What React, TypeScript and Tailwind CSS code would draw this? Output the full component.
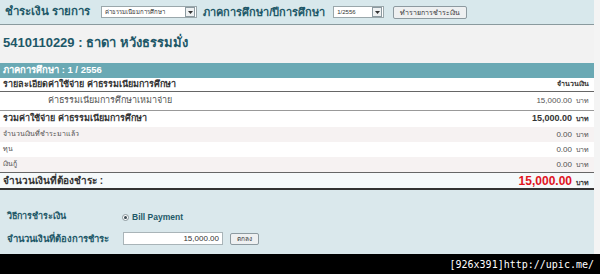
const FONT = "font-['Liberation_Sans','Noto_Sans',sans-serif]";

const rows = [
  { label: "จำนวนเงินที่ชำระมาแล้ว", amount: "0.00", bg: "bg-[#f6f2f2]" },
  { label: "ทุน", amount: "0.00", bg: "bg-white" },
  { label: "เงินกู้", amount: "0.00", bg: "bg-[#f6f2f2]" },
];

function Select({ value, width }: { value: string; width: string }) {
  return (
    <div className={`flex h-[12px] items-center border border-[#9aa7ab] bg-white ${width}`}>
      <span className="flex-1 truncate px-[3px] text-[6px] leading-none text-[#333]">{value}</span>
      <span className="mr-[1px] flex h-[10px] w-[10px] items-center justify-center border border-[#8c9aa0] bg-[#eef1f2]">
        <svg width="5" height="3" viewBox="0 0 5 3">
          <path d="M0 0h5L2.5 3z" fill="#333" />
        </svg>
      </span>
    </div>
  );
}

function Baht({ amount }: { amount: string }) {
  return (
    <span className="flex items-baseline gap-[4px]">
      <span className="text-[8px]">{amount}</span>
      <span className="text-[7px]">บาท</span>
    </span>
  );
}

export default function App() {
  return (
    <div className={`flex h-[274px] w-[600px] flex-col bg-black ${FONT}`}>
      <div className="flex h-[254px] w-[600px]">
        <div className="flex w-[594px] flex-col bg-[#f2f2f2]">
          {/* header */}
          <div className="flex h-[25px] items-center border-b border-[#8a9a9e] bg-[#d8e8ec] pl-[5px]">
            <span className="text-[11.5px] font-bold text-[#1e5868]">ชำระเงิน รายการ</span>
            <div className="ml-[11px]">
              <Select value="ค่าธรรมเนียมการศึกษา" width="w-[96px]" />
            </div>
            <span className="ml-[6px] text-[11px] font-bold text-[#1e5868]">ภาคการศึกษา/ปีการศึกษา</span>
            <div className="ml-[8px]">
              <Select value="1/2556" width="w-[51px]" />
            </div>
            <button className="ml-[9px] h-[13px] w-[74px] rounded-[2px] border border-[#8d9aa0] bg-[#eef0f1] text-[7px] leading-none text-[#333]">
              ทำรายการชำระเงิน
            </button>
          </div>

          {/* student */}
          <div className="flex h-[38px] items-center pl-[3px] pb-[3px]">
            <span className="text-[13px] font-bold text-[#1e5868]">5410110229 : ธาดา หวังธรรมมั่ง</span>
          </div>

          {/* term bar */}
          <div className="flex h-[15px] items-center bg-[#6aa9b4] pl-[3px]">
            <span className="text-[9.5px] font-bold text-white">ภาคการศึกษา : 1 / 2556</span>
          </div>

          {/* table */}
          <div className="flex flex-col bg-white text-[#444]">
            <div className="flex h-[14px] items-center justify-between border-b border-[#666] px-[3px] font-bold text-[#333]">
              <span className="text-[9px]">รายละเอียดค่าใช้จ่าย ค่าธรรมเนียมการศึกษา</span>
              <span className="pr-[2px] text-[7px]">จำนวนเงิน</span>
            </div>
            <div className="flex h-[19px] items-center justify-between border-b border-[#999] pl-[48px] pr-[5px] text-[#555]">
              <span className="text-[9px]">ค่าธรรมเนียมการศึกษาเหมาจ่าย</span>
              <Baht amount="15,000.00" />
            </div>
            <div className="flex h-[16px] items-center justify-between px-[3px] pr-[5px] font-bold text-[#333]">
              <span className="text-[9px]">รวมค่าใช้จ่าย ค่าธรรมเนียมการศึกษา</span>
              <span className="flex items-baseline gap-[4px]">
                <span className="text-[9px]">15,000.00</span>
                <span className="text-[7px]">บาท</span>
              </span>
            </div>
            {rows.map((r) => (
              <div
                key={r.label}
                className={`flex h-[15px] items-center justify-between px-[3px] pr-[5px] text-[#505050] ${r.bg}`}
              >
                <span className="text-[7px]">{r.label}</span>
                <Baht amount={r.amount} />
              </div>
            ))}
            <div className="flex h-[18px] items-center justify-between border-t border-b-2 border-t-[#666] border-b-[#333] bg-[#f5f9fa] px-[3px] pr-[5px] font-bold text-[#333]">
              <span className="text-[10px]">จำนวนเงินที่ต้องชำระ :</span>
              <span className="flex items-baseline gap-[4px]">
                <span className="text-[12px] text-[#e0141e]">15,000.00</span>
                <span className="text-[7px]">บาท</span>
              </span>
            </div>
          </div>

          {/* payment */}
          <div className="flex flex-1 flex-col justify-end gap-[8px] bg-[#dae8ec] pb-[8px] pl-[7px]">
            <div className="flex items-center">
              <span className="w-[115px] text-[9px] font-bold text-[#1e5868]">วิธีการชำระเงิน</span>
              <span className="flex items-center gap-[3px] text-[8.5px] font-bold text-[#1e5868]">
                <span className="flex h-[7px] w-[7px] items-center justify-center rounded-full border border-[#8a979c] bg-white">
                  <span className="h-[3px] w-[3px] rounded-full bg-[#3a4a52]" />
                </span>
                Bill Payment
              </span>
            </div>
            <div className="flex items-center">
              <span className="w-[116px] text-[9.5px] font-bold text-[#1e5868]">จำนวนเงินที่ต้องการชำระ</span>
              <div className="flex h-[13px] w-[100px] items-center justify-end border border-[#a9b4b8] bg-white pr-[3px] text-[8px] text-[#333]">
                15,000.00
              </div>
              <button className="ml-[7px] h-[12px] rounded-[2px] border border-[#8d9aa0] bg-[#eef0f1] px-[6px] text-[6.5px] leading-none text-[#333]">
                ตกลง
              </button>
            </div>
          </div>
        </div>
        <div className="w-[6px] bg-[#f4f4f4]" />
      </div>
      <div className="flex flex-1 items-center justify-end pr-[6px]">
        <span className="font-['DejaVu_Sans_Mono',monospace] text-[10px] text-white">[926x391]http://upic.me/</span>
      </div>
    </div>
  );
}
